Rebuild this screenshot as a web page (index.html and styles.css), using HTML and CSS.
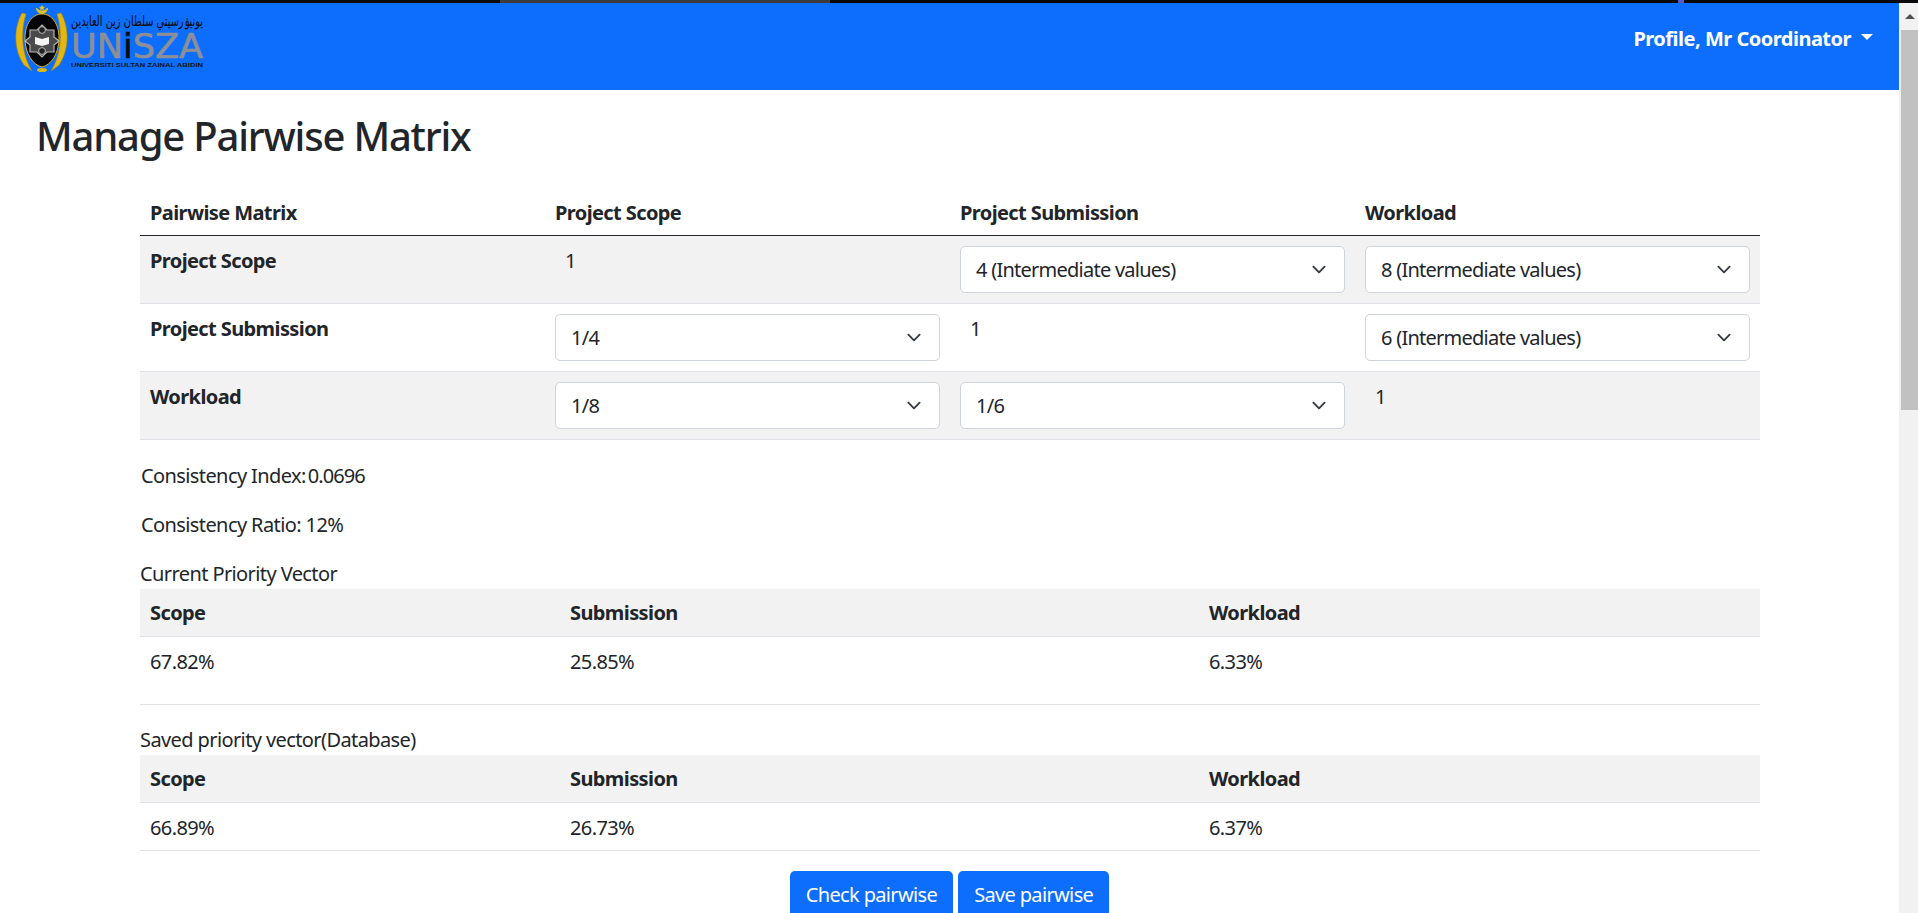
FILE: index.html
```html
<!DOCTYPE html>
<html lang="en">
  <head>
    <meta charset="UTF-8" />
    <meta name="viewport" content="width=device-width, initial-scale=1.0" />
    <title>Manage Pairwise Matrix</title>
    <link rel="stylesheet" href="styles.css">
  </head>
  <body>
    <div class="top-strip"></div>
    <div class="frame">
      <div class="page">
        <!-- Navbar -->
        <nav class="navbar">
          <svg class="logo" width="192" height="72" viewBox="0 0 192 72">
            <!-- crest -->
            <path d="M8 8 C0 22 -1 44 10 60 L18 66 C8 50 6 28 12 9 Z" fill="#e3b711" stroke="#a98608" stroke-width="0.6" />
            <path d="M47 8 C55 22 56 44 45 60 L37 66 C47 50 49 28 43 9 Z" fill="#e3b711" stroke="#a98608" stroke-width="0.6" />
            <path d="M28 9 C38 9 45 19 45 33 C45 49 37 60 28 62 C19 60 11 49 11 33 C11 19 18 9 28 9 Z" fill="#050505" stroke="#d9b21a" stroke-width="1" />
            <path d="M28 20 L33 25 L40 25 L40 32 L45 36 L40 40 L40 47 L33 47 L28 52 L23 47 L16 47 L16 40 L11 36 L16 32 L16 25 L23 25 Z" fill="#4a4a4a" stroke="#b5b5b5" stroke-width="1.2" />
            <circle cx="28" cy="25" r="3.4" fill="#222" stroke="#bbb" />
            <circle cx="28" cy="46" r="3.4" fill="#222" stroke="#bbb" />
            <path d="M21 32 L28 34 L35 32 L35 39 L28 41 L21 39 Z" fill="#f4f4f4" />
            <path d="M22.5 3 A5.5 5.5 0 0 0 33.5 3 A6.5 6.5 0 0 1 22.5 3 Z" fill="#e8c21c" stroke="#e8c21c" />
            <path d="M28 0 L29 1.8 L31 2 L29.5 3.4 L30 5.4 L28 4.3 L26 5.4 L26.5 3.4 L25 2 L27 1.8 Z" fill="#e8c21c" />
            <ellipse cx="28" cy="65" rx="5" ry="2" fill="#e3b711" />
            <!-- wordmark -->
            <text class="logo-jawi" x="189" y="21" text-anchor="start" direction="rtl" textLength="132" lengthAdjust="spacingAndGlyphs">يونيۏرسيتي سلطان زين العابدين</text>
            <text class="logo-name" x="57" y="53" textLength="132" lengthAdjust="spacingAndGlyphs">UN<tspan class="logo-i">i</tspan>SZA</text>
            <text class="logo-caption" x="57" y="62" textLength="132" lengthAdjust="spacingAndGlyphs">UNIVERSITI SULTAN ZAINAL ABIDIN</text>
          </svg>
          <a class="profile" href="#">Profile, Mr Coordinator<span class="caret"></span></a>
        </nav>

        <h1 class="page-title">Manage Pairwise Matrix</h1>

        <main class="content">
          <!-- Pairwise table -->
          <table class="matrix">
            <thead>
              <tr>
                <th>Pairwise Matrix</th>
                <th>Project Scope</th>
                <th>Project Submission</th>
                <th>Workload</th>
              </tr>
            </thead>
            <tbody>
              <tr class="striped">
                <th>Project Scope</th>
                <td class="unit">1</td>
                <td>
                  <select class="pick"><option>4 (Intermediate values)</option><option>5 (Strong importance)</option></select>
                </td>
                <td>
                  <select class="pick"><option>8 (Intermediate values)</option><option>9 (Extreme importance)</option></select>
                </td>
              </tr>
              <tr>
                <th>Project Submission</th>
                <td>
                  <select class="pick"><option>1/4</option><option>1/5</option></select>
                </td>
                <td class="unit">1</td>
                <td>
                  <select class="pick"><option>6 (Intermediate values)</option><option>7 (Very strong)</option></select>
                </td>
              </tr>
              <tr class="striped">
                <th>Workload</th>
                <td>
                  <select class="pick"><option>1/8</option><option>1/9</option></select>
                </td>
                <td>
                  <select class="pick"><option>1/6</option><option>1/7</option></select>
                </td>
                <td class="unit">1</td>
              </tr>
            </tbody>
          </table>

          <p class="score score-index">Consistency Index:<span class="score-value">0.0696</span></p>
          <p class="score score-ratio">Consistency Ratio: 12%</p>

          <!-- Current vector -->
          <div class="vector-label">Current Priority Vector</div>
          <table class="vector vector-current">
            <thead>
              <tr>
                <th class="col-scope">Scope</th>
                <th class="col-submission">Submission</th>
                <th>Workload</th>
              </tr>
            </thead>
            <tbody>
              <tr>
                <td>67.82%</td>
                <td>25.85%</td>
                <td>6.33%</td>
              </tr>
            </tbody>
          </table>

          <!-- Saved vector -->
          <div class="vector-label vector-label-saved">Saved priority vector(Database)</div>
          <table class="vector">
            <thead>
              <tr>
                <th class="col-scope">Scope</th>
                <th class="col-submission">Submission</th>
                <th>Workload</th>
              </tr>
            </thead>
            <tbody>
              <tr>
                <td>66.89%</td>
                <td>26.73%</td>
                <td>6.37%</td>
              </tr>
            </tbody>
          </table>

          <div class="actions">
            <button class="btn" type="button">Check pairwise</button>
            <button class="btn" type="button">Save pairwise</button>
          </div>
        </main>
      </div>

      <div class="scrollbar">
        <div class="scroll-up"><span class="scroll-arrow"></span></div>
        <div class="scroll-thumb"></div>
      </div>
    </div>
  </body>
</html>
```

FILE: styles.css
```css
html,
body {
  height: 100%;
  margin: 0;
  overflow: hidden;
}

body {
  display: flex;
  flex-direction: column;
  font-family: "Noto Sans", "Open Sans", Arial, sans-serif;
  font-size: 20px;
  line-height: 30px;
  letter-spacing: -0.6px;
  color: #212529;
  background-color: #fff;
}

.top-strip {
  height: 3px;
  flex: none;
  background: linear-gradient(to right, #0b0b0e 0, #0b0b0e 500px, #3c3c40 500px, #3c3c40 830px, #08080a 830px, #08080a 1678px, #5a5ad0 1678px, #5a5ad0 1684px, #08080a 1684px);
}

.frame {
  display: flex;
  flex: 1;
  min-height: 0;
}

.page {
  flex: 1;
  min-width: 0;
  overflow: hidden;
}

/* Navbar */
.navbar {
  display: flex;
  justify-content: space-between;
  align-items: flex-start;
  height: 87px;
  padding-left: 14px;
  padding-right: 26px;
  box-sizing: border-box;
  background-color: #0d6efd;
}

.logo {
  margin-top: 2px;
}

.logo-jawi {
  font-family: "DejaVu Sans", sans-serif;
  font-size: 15px;
  letter-spacing: 0;
  fill: #0a0a0a;
}

.logo-name {
  font-family: "DejaVu Sans", sans-serif;
  font-size: 34px;
  letter-spacing: 0;
  fill: #8d8f97;
  stroke: #8d8f97;
  stroke-width: 0.6;
}

.logo-i {
  fill: #0a0a0a;
  stroke: #0a0a0a;
}

.logo-caption {
  font-family: "Liberation Sans", sans-serif;
  font-size: 6px;
  font-weight: bold;
  letter-spacing: 0;
  fill: #111;
}

.profile {
  display: flex;
  align-items: center;
  margin-top: 21px;
  color: #fff;
  font-weight: 700;
  letter-spacing: -0.5px;
  text-decoration: none;
}

.caret {
  width: 0;
  height: 0;
  margin-left: 10px;
  margin-bottom: 4px;
  border-top: 6px solid #fff;
  border-left: 6px solid transparent;
  border-right: 6px solid transparent;
}

/* Headings */
.page-title {
  margin: 22px 0 1px 36px;
  font-size: 40px;
  line-height: 48px;
  font-weight: 500;
  letter-spacing: -1.2px;
}

.content {
  padding: 29px 139px 0 140px;
}

/* Tables */
table {
  width: 100%;
  table-layout: fixed;
  border-collapse: separate;
  border-spacing: 0;
}

th {
  text-align: left;
  font-weight: 700;
}

.matrix th,
.matrix td {
  padding: 10px;
  vertical-align: top;
  border-bottom: 1px solid #dee2e6;
}

.matrix thead th {
  padding-top: 8px;
  padding-bottom: 7px;
  border-bottom: 1px solid #212529;
}

.striped th,
.striped td {
  background-color: #f2f2f2;
}

.matrix .unit {
  padding-left: 20px;
}

.pick {
  display: block;
  width: 100%;
  height: 47px;
  padding: 0 45px 0 15px;
  border: 1px solid #ced4da;
  border-radius: 5px;
  font-family: inherit;
  font-size: 20px;
  letter-spacing: -0.75px;
  color: #212529;
  background-color: #fff;
  background-image: url("data:image/svg+xml,%3csvg xmlns='http://www.w3.org/2000/svg' viewBox='0 0 16 16'%3e%3cpath fill='none' stroke='%23343a40' stroke-linecap='round' stroke-linejoin='round' stroke-width='2' d='M2 5l6 6 6-6'/%3e%3c/svg%3e");
  background-repeat: no-repeat;
  background-position: right 15px center;
  background-size: 20px 15px;
  appearance: none;
}

.score {
  margin: 0;
  padding-left: 1px;
}

.score-index {
  margin-top: 21px;
}

.score-ratio {
  margin-top: 19px;
}

.score-value {
  margin-left: 2px;
  letter-spacing: -0.9px;
}

.vector-label {
  margin-top: 19px;
}

.vector-label-saved {
  margin-top: 20px;
}

.col-scope {
  width: 420px;
  box-sizing: border-box;
}

.col-submission {
  width: 639px;
  box-sizing: border-box;
}

.vector th {
  padding: 9px 10px 8px;
  background-color: #f2f2f2;
  border-bottom: 1px solid #dee2e6;
}

.vector td {
  padding: 10px 10px 7px;
  border-bottom: 1px solid #dee2e6;
}

.vector-current td {
  padding-bottom: 27px;
}

/* Buttons */
.actions {
  display: flex;
  justify-content: center;
  gap: 5px;
  margin-top: 20px;
  margin-left: -1px;
}

.btn {
  height: 47px;
  padding: 0 16px;
  border: none;
  border-radius: 5px;
  font-family: inherit;
  font-size: 20px;
  letter-spacing: -0.65px;
  color: #fff;
  background-color: #0d6efd;
}

/* Scrollbar */
.scrollbar {
  flex: none;
  width: 19px;
  background-color: #f1f1f1;
}

.scroll-up {
  display: flex;
  align-items: center;
  justify-content: center;
  height: 27px;
  padding-left: 2px;
  box-sizing: border-box;
}

.scroll-arrow {
  width: 0;
  height: 0;
  border-bottom: 5px solid #505050;
  border-left: 5px solid transparent;
  border-right: 5px solid transparent;
}

.scroll-thumb {
  height: 380px;
  margin-left: 2px;
  background-color: #c1c1c1;
}
```
